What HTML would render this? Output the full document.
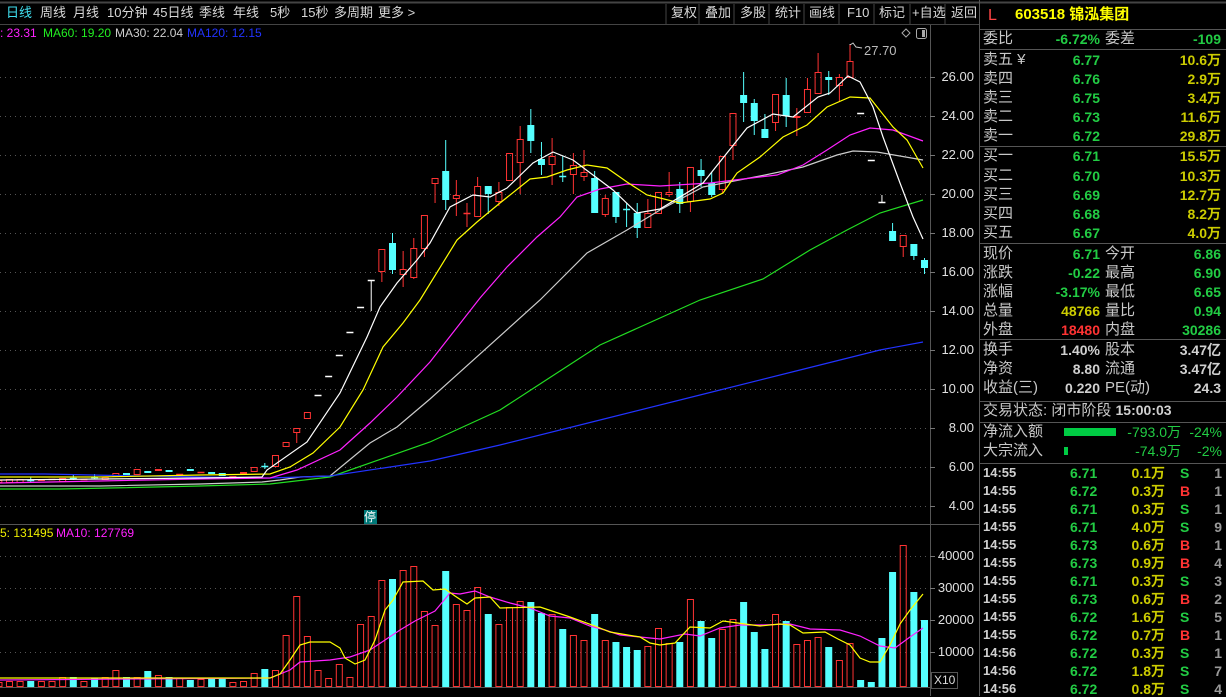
<!DOCTYPE html>
<html><head><meta charset="utf-8">
<style>
*{margin:0;padding:0;box-sizing:border-box}
body{width:1226px;height:696px;background:#000;overflow:hidden;position:relative;font-family:"Liberation Sans","Noto Sans CJK SC",sans-serif;color:#c8c8c8}
.a{position:absolute;white-space:nowrap;line-height:1}
.tab{font-size:13px;top:6px;color:#d8d8d8}
.lg{font-size:12px;top:27px}
.ax{font-size:13px;color:#e0e0e0;right:252px;text-align:right}
.rp{font-size:14px}
.lb{color:#c8c8c8;font-size:15px}
.g{color:#22cc44;font-weight:bold}
.y{color:#cccc00;font-weight:bold}
.w{color:#d0d0d0;font-weight:bold}
.r{color:#ff3333;font-weight:bold}
</style></head><body>
<svg id="s" width="1226" height="696" style="position:absolute;left:0;top:0">
<line x1="0" y1="2.5" x2="1226" y2="2.5" stroke="#444" stroke-width="2"/>
<line x1="0" y1="24.5" x2="980" y2="24.5" stroke="#444"/>
<line x1="930.5" y1="25" x2="930.5" y2="696" stroke="#555"/>
<line x1="0" y1="524.5" x2="980" y2="524.5" stroke="#555"/>
<line x1="0" y1="687.5" x2="930" y2="687.5" stroke="#555"/>
<line x1="979.5" y1="0" x2="979.5" y2="696" stroke="#555"/>
<rect x="931.5" y="672.5" width="26" height="16" fill="none" stroke="#555"/>
<g stroke="#444">
<line x1="666" y1="4" x2="666" y2="24"/><line x1="699" y1="4" x2="699" y2="24"/><line x1="734" y1="4" x2="734" y2="24"/><line x1="769" y1="4" x2="769" y2="24"/><line x1="804" y1="4" x2="804" y2="24"/><line x1="839" y1="4" x2="839" y2="24"/><line x1="874" y1="4" x2="874" y2="24"/><line x1="910" y1="4" x2="910" y2="24"/><line x1="945" y1="4" x2="945" y2="24"/>
</g>
<g stroke="#555">
<line x1="980" y1="29.5" x2="1226" y2="29.5"/><line x1="980" y1="49.5" x2="1226" y2="49.5"/><line x1="980" y1="146.5" x2="1226" y2="146.5"/><line x1="980" y1="243.5" x2="1226" y2="243.5"/><line x1="980" y1="339.5" x2="1226" y2="339.5"/><line x1="980" y1="401.5" x2="1226" y2="401.5"/><line x1="980" y1="422.5" x2="1226" y2="422.5"/><line x1="980" y1="463.5" x2="1226" y2="463.5"/>
</g>
<rect x="1064" y="428" width="52" height="8" fill="#00cc44"/>
<rect x="1064" y="447" width="4" height="8" fill="#00cc44"/>
<path d="M902 33 L906 29 L910 33 L906 37 Z" fill="none" stroke="#aaa"/>
<rect x="916.5" y="28.5" width="10" height="10" rx="2" fill="none" stroke="#aaa"/><rect x="922" y="30" width="3" height="7" fill="#aaa"/>
<path d="M850 52 L850 44 M850 45 L853 43 L856 47 L862 48" fill="none" stroke="#ccc"/>
<rect x="364" y="510" width="13" height="14" fill="#007878"/>
<g id="d"></g>
</svg>
<div class="a" style="left:364px;top:511px;font-size:12px;color:#fff">停</div>
<div class="a tab" style="left:6px;color:#40e0f0">日线</div>
<div class="a tab" style="left:40px">周线</div><div class="a tab" style="left:73px">月线</div>
<div class="a tab" style="left:107px">10分钟</div><div class="a tab" style="left:153px">45日线</div>
<div class="a tab" style="left:199px">季线</div><div class="a tab" style="left:233px">年线</div>
<div class="a tab" style="left:270px">5秒</div><div class="a tab" style="left:301px">15秒</div>
<div class="a tab" style="left:334px">多周期</div><div class="a tab" style="left:378px">更多 &gt;</div>
<div class="a tab" style="left:671px">复权</div><div class="a tab" style="left:705px">叠加</div>
<div class="a tab" style="left:740px">多股</div><div class="a tab" style="left:775px">统计</div>
<div class="a tab" style="left:809px">画线</div><div class="a tab" style="left:847px">F10</div>
<div class="a tab" style="left:879px">标记</div><div class="a tab" style="left:912px">+自选</div>
<div class="a tab" style="left:951px">返回</div>
<div class="a lg" style="left:0;color:#ff22ff">: 23.31</div>
<div class="a lg" style="left:43px;color:#22ee22">MA60: 19.20</div>
<div class="a lg" style="left:115px;color:#cfcfcf">MA30: 22.04</div>
<div class="a lg" style="left:187px;color:#2233ff">MA120: 12.15</div>
<div class="a" style="left:864px;top:44px;font-size:13px;color:#bbb">27.70</div>
<div class="a lg" style="left:0;top:527px;color:#eeee00">5: 131495</div>
<div class="a lg" style="left:56px;top:527px;color:#ff22ff">MA10: 127769</div>
<div class="a" style="left:934px;top:674px;font-size:12px;color:#ddd">X10</div>
<div id="ax"></div>
<div id="rp"></div>
<script>
var NS="http://www.w3.org/2000/svg",D=document.getElementById("d");
function el(t,a){var e=document.createElementNS(NS,t);for(var k in a)e.setAttribute(k,a[k]);D.appendChild(e);return e;}
var pl=[77,116,155,194,233,272,311,350,389,428,467,506],pv=["26.00","24.00","22.00","20.00","18.00","16.00","14.00","12.00","10.00","8.00","6.00","4.00"];
var ax="";
pl.forEach(function(y,i){el("line",{x1:0,y1:y+.5,x2:930,y2:y+.5,stroke:"#555","stroke-dasharray":"1 4"});el("line",{x1:930,y1:y+.5,x2:935,y2:y+.5,stroke:"#777"});ax+='<div class="a ax" style="top:'+(y-7)+'px">'+pv[i]+'</div>';});
[556,588,620,652].forEach(function(y,i){el("line",{x1:0,y1:y+.5,x2:930,y2:y+.5,stroke:"#555","stroke-dasharray":"1 4"});el("line",{x1:930,y1:y+.5,x2:935,y2:y+.5,stroke:"#777"});ax+='<div class="a ax" style="top:'+(y-7)+'px">'+["40000","30000","20000","10000"][i]+'</div>';});
document.getElementById("ax").innerHTML=ax;
function cx(i){return 924.5-(86-i)*10.64;}
// candles: [i,color,bodyTop,bodyBot,wickTop,wickBot]
var C=[[-1,'r',480,483],[0,'r',479,483],[1,'r',479,483],[2,'c',480,480,477,482],[3,'r',479,481],[4,'r',479,480],[5,'r',478,482],[6,'c',478,478,475,480],[7,'r',479,480],[8,'c',477,477,474,479],[9,'r',477,480],[10,'r',473,477],[11,'c',473,475],[12,'r',469,475],[13,'c',471,473],[14,'r',469,471],[15,'c',470,472],[16,'r',474,475],[17,'c',469,471],[18,'r',472,473],[19,'c',472,474],[20,'c',473,476],[21,'r',476,478],[22,'r',472,474],[23,'r',467,472],[24,'c',466,466,463,469],[25,'r',455,467],[26,'r',442,447],[27,'r',428,433,428,443],[28,'r',412,419],[29,'w',395,395],[30,'w',376,376],[31,'w',355,355],[32,'w',332,332],[33,'w',307,307],[34,'w',280,280,280,311],
[35,'r',249,272,249,282],[36,'c',243,270,233,274],[37,'r',269,275,251,287],[38,'r',248,278,238,279],[39,'r',215,249,215,257],[40,'r',178,184,178,203],[41,'c',171,200,140,210],[42,'r',195,199,180,216],[43,'r',213,213,203,227],[44,'r',186,217,177,217],[45,'c',186,194,186,214],[46,'r',192,202,182,206],[47,'r',153,181],[48,'r',139,163,126,194],[49,'c',125,141,109,153],[50,'c',159,165,142,175],[51,'r',156,165,138,185],[52,'c',176,176,156,182],[53,'r',165,175,153,194],[54,'r',172,177,150,181],[55,'c',178,213,171,213],[56,'r',198,215,195,217],[57,'c',192,217,192,223],[58,'c',209,209,203,227],[59,'c',213,228,203,238],[60,'r',213,228,199,228],[61,'r',192,214],[62,'r',192,195,172,197],[63,'c',189,204,182,213],[64,'r',167,202,167,212],[65,'c',170,176,159,187],[66,'c',183,195,172,197],[67,'r',156,190,156,193],[68,'r',113,146,113,160],[69,'c',95,103,72,122],[70,'c',103,121,99,135],[71,'c',129,138,114,138],[72,'r',94,123,94,131],[73,'c',95,116,78,127],[74,'r',116,118,108,136],[75,'r',89,113,78,113],[76,'r',72,94,53,94],[77,'c',77,80,71,95],[78,'r',77,86,74,102],[79,'r',61,78,45,78],[80,'w',113,113],[81,'w',160,160],[82,'w',202,202,195,202],[83,'c',231,241,223,241],[84,'r',235,247,235,257],[85,'c',244,256,244,260],[86,'c',260,268,258,274]];
var col={r:"#ff3333",c:"#55ffff",w:"#ffffff"};
C.forEach(function(d){var x=cx(d[0]),c=col[d[1]],t=d[2],b=d[3],wt=d[4]||t,wb=d[5]||b;
 if(wt<t)el("line",{x1:x,y1:wt,x2:x,y2:t,stroke:c});if(wb>b)el("line",{x1:x,y1:b,x2:x,y2:wb,stroke:c});
 if(b-t<1.5){el("line",{x1:x-3.5,y1:t+.5,x2:x+3.5,y2:t+.5,stroke:c,"stroke-width":1.5});}
 else if(d[1]=='c')el("rect",{x:x-3.5,y:t,width:7,height:b-t,fill:c});
 else el("rect",{x:x-3,y:t+.5,width:6,height:b-t-1,fill:"none",stroke:c});
});
function line(pts,c){el("polyline",{points:pts,fill:"none",stroke:c,"stroke-width":1.2});}
line("0,486 100,486 200,484 262,482 280,480 300,477 330,476 370,443 397,427 430,399 540,300 587,253 627,230 660,210 703,187 760,176 803,167 837,155 853,151 877,152 923,160","#cccccc");
line("0,489 60,489 110,488 200,486 270,484 330,477 430,442 500,410 600,345 700,300 763,279 810,250 847,230 880,213 923,200","#22dd22");
line("0,474 45,474 140,476 270,478 330,476 430,461 500,445 600,420 700,395 800,370 880,350 923,342","#2233ff");
line("0,483 100,481 200,479 270,478 297,470 340,450 370,423 397,397 430,362 480,298 507,267 537,237 560,217 577,197 600,189 627,184 660,186 710,183 743,179 777,175 803,165 827,150 850,135 870,128 893,130 923,141","#ff22ff");
line("0,477 100,477 200,475 270,474 290,467 313,453 340,427 363,390 383,347 403,323 420,300 457,240 477,222 500,203 530,179 547,177 567,170 587,165 607,168 627,182 647,195 660,198 680,203 710,199 723,193 737,173 760,157 783,137 807,125 827,107 850,97 870,98 893,127 907,140 923,168","#ffff00");
line("0,480 100,479 200,478 262,477 267,470 307,442 340,393 367,337 380,307 397,283 417,260 430,243 450,207 473,195 490,197 507,188 533,163 553,152 573,160 593,175 613,190 637,213 660,209 703,183 747,128 773,114 793,117 818,97 830,93 848,76 860,82 873,107 883,137 900,183 913,217 923,239","#ffffff");
// volumes
var V=[681,681,681,681,681,677,677,681,678,677,670,677,677,671,675,677,678,680,679,679,679,682,681,673,669,670,635,596,636,670,678,664,677,624,616,580,579,570,566,611,625,571,604,610,587,614,624,607,601,602,613,614,629,635,640,614,640,642,647,650,646,628,643,642,599,621,638,629,619,602,632,649,614,621,644,640,637,647,660,643,680,682,638,572,545,592,620];
var cc={};C.forEach(function(d){cc[d[0]]=d[1];});
el("rect",{x:-4,y:682.5,width:6,height:4,fill:"none",stroke:"#ff3333"});
V.forEach(function(t,i){var x=cx(i),c=cc[i];if(c=='c'||i==80||i==81||i==82)el("rect",{x:x-3.5,y:t,width:7,height:687-t,fill:"#55ffff"});else el("rect",{x:x-3,y:t+.5,width:6,height:686-t,fill:"none",stroke:"#ff3333"});});
line("0,680 270,678 290,670 300,662 330,660 350,657 370,650 385,640 400,630 415,621 435,611 450,593 460,594 475,591 490,597 510,603 530,608 550,616 570,618 590,626 605,630 620,635 640,637 660,639 685,634 700,636 720,628 740,625 760,625 790,624 810,629 840,630 860,636 880,646 895,648 910,637 923,628","#ff22ff");
line("0,678 270,678 280,674 290,660 300,645 310,642 330,642 340,648 345,658 355,664 365,660 375,640 385,610 393,600 403,582 423,581 433,590 445,589 455,596 467,604 475,598 490,597 500,608 540,607 555,612 570,617 595,626 610,632 640,637 650,643 660,645 675,643 690,627 710,628 723,621 745,624 760,626 780,624 790,625 803,633 825,632 838,639 850,645 860,658 870,662 880,662 890,645 900,624 910,610 923,594","#ffff00");
// right panel
var h='<div class="a" style="left:988px;top:8px;font-size:16px;color:#ff4444">L</div><div class="a" style="left:1015px;top:7px;font-size:15px;color:#ffff00;font-weight:bold">603518 锦泓集团</div>';
function row(y,l,v,vc,l2,v2,v2c){h+='<div class="a lb" style="left:983px;top:'+(y-8)+'px">'+l+'</div>';
 h+='<div class="a rp '+vc+'" style="right:126px;top:'+(y-7)+'px">'+v+'</div>';
 if(l2)h+='<div class="a lb" style="left:1105px;top:'+(y-8)+'px">'+l2+'</div>';
 h+='<div class="a rp '+v2c+'" style="right:5px;top:'+(y-7)+'px">'+v2+'</div>';}
row(39,"委比","-6.72%","g","委差","-109","g");
var ob=[["卖五 ¥","6.77","10.6万"],["卖四","6.76","2.9万"],["卖三","6.75","3.4万"],["卖二","6.73","11.6万"],["卖一","6.72","29.8万"],["买一","6.71","15.5万"],["买二","6.70","10.3万"],["买三","6.69","12.7万"],["买四","6.68","8.2万"],["买五","6.67","4.0万"]];
var oy=[60,79,98,117,136,156,176,195,214,233];
ob.forEach(function(o,i){row(oy[i],o[0],o[1],"g","",o[2],"y");});
row(254,"现价","6.71","g","今开","6.86","g");row(273,"涨跌","-0.22","g","最高","6.90","g");
row(292,"涨幅","-3.17%","g","最低","6.65","g");row(311,"总量","48766","y","量比","0.94","g");
row(330,"外盘","18480","r","内盘","30286","g");
row(350,"换手","1.40%","w","股本","3.47亿","w");row(369,"净资","8.80","w","流通","3.47亿","w");
row(388,"收益(三)","0.220","w","PE(动)","24.3","w");
h+='<div class="a lb" style="left:983px;top:403px">交易状态: 闭市阶段 <b style="color:#d0d0d0;font-size:14px">15:00:03</b></div>';
h+='<div class="a lb" style="left:983px;top:424px">净流入额</div><div class="a rp g" style="right:45px;top:425px;font-weight:normal">-793.0万</div><div class="a rp g" style="right:4px;top:425px;font-weight:normal">-24%</div>';
h+='<div class="a lb" style="left:983px;top:443px">大宗流入</div><div class="a rp g" style="right:45px;top:444px;font-weight:normal">-74.9万</div><div class="a rp g" style="right:4px;top:444px;font-weight:normal">-2%</div>';
var T=[["14:55","6.71","0.1万","S","1"],["14:55","6.72","0.3万","B","1"],["14:55","6.71","0.3万","S","1"],["14:55","6.71","4.0万","S","9"],["14:55","6.73","0.6万","B","1"],["14:55","6.73","0.9万","B","4"],["14:55","6.71","0.3万","S","3"],["14:55","6.73","0.6万","B","2"],["14:55","6.72","1.6万","S","5"],["14:55","6.72","0.7万","B","1"],["14:56","6.72","0.3万","S","1"],["14:56","6.72","1.8万","S","7"],["14:56","6.72","0.8万","S","4"]];
T.forEach(function(t,i){var y=473+i*18-7;
 h+='<div class="a rp w" style="left:983px;top:'+y+'px;font-size:13px">'+t[0]+'</div><div class="a rp g" style="left:1070px;top:'+y+'px">'+t[1]+'</div><div class="a rp y" style="right:61px;top:'+y+'px">'+t[2]+'</div><div class="a rp '+(t[3]=="B"?"r":"g")+'" style="left:1180px;top:'+y+'px">'+t[3]+'</div><div class="a rp" style="right:4px;top:'+y+'px;color:#999;font-weight:bold">'+t[4]+'</div>';});
document.getElementById("rp").innerHTML=h;
</script>
</body></html>
